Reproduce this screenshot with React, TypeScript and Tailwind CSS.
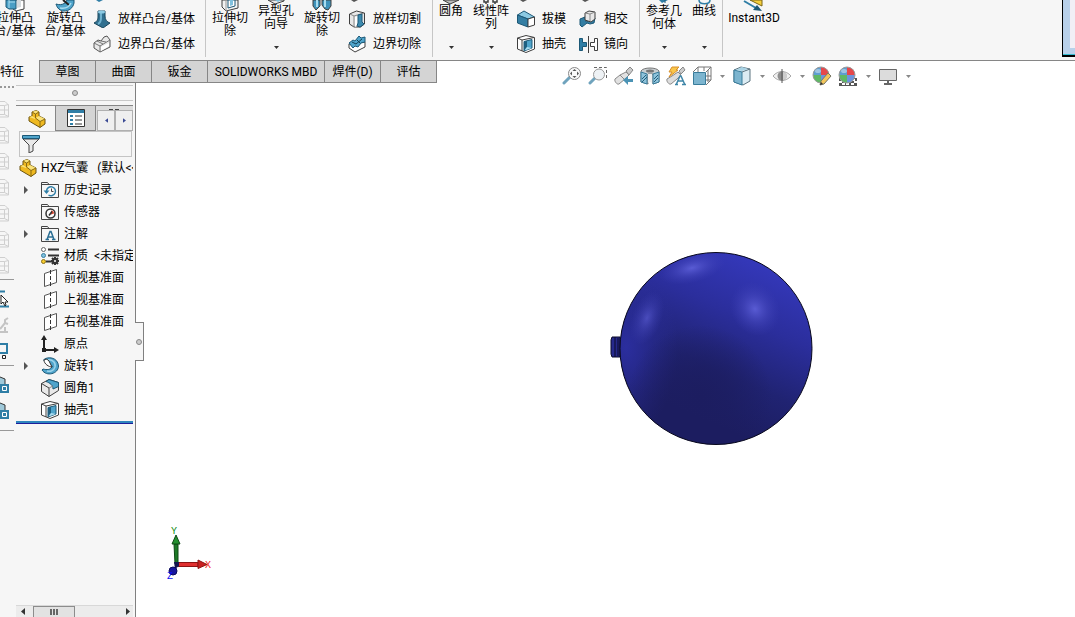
import type { ReactNode } from 'react';

type IconProps = { className?: string };

const OUTLINE = '#3f3f3f';
const BLUE = '#2f7ea6';
const SKY = '#7fc0de';

function Caret({ className = 'text-[#333]' }: IconProps) {
  return (
    <svg width="5" height="3" viewBox="0 0 5 3" className={className} aria-hidden="true">
      <path d="M0 0h5L2.5 3z" fill="currentColor" />
    </svg>
  );
}

/* ---------- large ribbon icons, only the lower part shows ---------- */

function ExtrudeTip() {
  return (
    <svg width="22" height="12" viewBox="0 0 22 12">
      <path d="M9 0v9l3 2 8-2V0z" fill="#fff" stroke={OUTLINE} />
      <path d="M13 0v8l4-1V0z" fill="#d5dadd" />
      <path d="M2 0v7l3 2h7V0z" fill="#4a9fc6" stroke="#1c5876" />
      <path d="M5 2h6M5 0v8" stroke="#a9dcef" />
    </svg>
  );
}

function RevolveTip() {
  return (
    <svg width="22" height="12" viewBox="0 0 22 12">
      <path d="M2 4c3 1 6 1 9-1l2-3h7v3c-1 5-5 8-10 8-4 0-7-3-8-7z" fill="#4fa4cb" stroke="#1c5876" />
      <path d="M9 0l6 5" stroke="#222" strokeWidth="2" />
      <path d="M6 8c5 1 9-1 11-5" stroke="#a9dcef" fill="none" strokeWidth="1.5" />
    </svg>
  );
}

function CutTip() {
  return (
    <svg width="18" height="12" viewBox="0 0 18 12">
      <path d="M1 0v7l4 4 12-3V0z" fill="#f2f2f2" stroke={OUTLINE} />
      <path d="M5 0v11" stroke="#999" />
      <path d="M7 0v8l7-2V0z" fill="#fff" stroke="#1c5876" />
      <path d="M9 0v6l3-1V0z" fill={SKY} />
    </svg>
  );
}

function HoleTip() {
  return (
    <svg width="18" height="5" viewBox="0 0 18 5">
      <path d="M1 0l7 4 9-3V0z" fill="#e8e8e8" stroke={OUTLINE} />
      <path d="M8 0l3 2 3-2z" fill={SKY} />
    </svg>
  );
}

function RevolveCutTip() {
  return (
    <svg width="20" height="12" viewBox="0 0 20 12">
      <path d="M1 0v6l3 4 4-4V0z" fill="#3f93bb" stroke={OUTLINE} />
      <path d="M10 0v5l3 4 3 1 3-4V0z" fill="#3f93bb" stroke={OUTLINE} />
      <path d="M5 0v7M13 0v7" stroke="#a9dcef" strokeWidth="2" />
    </svg>
  );
}

function FilletTip() {
  return (
    <svg width="18" height="5" viewBox="0 0 18 5">
      <path d="M1 0l7 4 9-4z" fill="#b8b8b8" stroke={OUTLINE} />
    </svg>
  );
}

function PatternTip() {
  return (
    <svg width="18" height="5" viewBox="0 0 18 5">
      <path d="M2 0v2h4V0M11 0v2h4V0M4 2v2M13 2v2" fill="none" stroke={OUTLINE} strokeWidth="1.5" />
    </svg>
  );
}

function ReferenceTip() {
  return (
    <svg width="18" height="5" viewBox="0 0 18 5">
      <path d="M4 0h9L7 3z" fill={BLUE} />
      <path d="M10 0v3" stroke="#1c5876" />
    </svg>
  );
}

function CurveTip() {
  return (
    <svg width="18" height="5" viewBox="0 0 18 5">
      <path d="M4 0c0 5 11 5 11 0" fill="none" stroke={BLUE} strokeWidth="1.5" />
    </svg>
  );
}

function Instant3DTip() {
  return (
    <svg width="22" height="12" viewBox="0 0 22 12">
      <path d="M7 0h12v6z" fill="#f6cf3c" stroke="#7a6414" />
      <path d="M1 1l12 7" stroke={BLUE} strokeWidth="2" />
      <path d="M19 11l-9-1 4-5z" fill="#1c5876" />
    </svg>
  );
}

/* ---------- small ribbon icons ---------- */

function Small({ children }: { children: ReactNode }) {
  return (
    <svg width="18" height="18" viewBox="0 0 18 18" className="shrink-0" aria-hidden="true">
      {children}
    </svg>
  );
}

function LoftIcon() {
  return (
    <Small>
      <path d="M5 1h7v5c0 4 2 6 5 7l-7 5-9-5c4-2 4-4 4-7z" fill="#31708f" stroke="#1b475c" />
      <path d="M8 2v6c0 3-1 5-3 6" stroke="#6fb2cf" strokeWidth="2" fill="none" />
      <ellipse cx="8.500" cy="2" rx="3.500" ry="1.500" fill="#8ccae3" />
    </Small>
  );
}

function BoundaryIcon() {
  return (
    <Small>
      <path d="M1 8l4-3 3 1 3-4 3-1 3 4v7l-10 5-6-4z" fill="#e9e9e9" stroke="#555" />
      <path d="M1 8l6 3 10-6M7 11v6M4 6l6 3M8 6l5 1" stroke="#777" fill="none" />
      <path d="M8 12l8-4v3l-8 5z" fill="#fff" />
    </Small>
  );
}

function LoftCutIcon() {
  return (
    <Small>
      <path d="M1.500 4l7-3 8 2v11l-4 3H6l-4.500-3z" fill="#e8e8e8" stroke={OUTLINE} />
      <path d="M2 4l4 2v11M6 6l10-3" stroke="#888" fill="none" />
      <path d="M7 7l3-1v9l-3 2z" fill="#fff" />
      <path d="M10 5l4-1v8l2 2-4 3-3-1 1-3z" fill="#3d8bb0" stroke="#1c5876" />
    </Small>
  );
}

function BoundaryCutIcon() {
  return (
    <Small>
      <path d="M1 9v4l6 4 10-5V7z" fill="#fff" stroke={OUTLINE} />
      <path d="M1 8l4-3 2 1 4-5 2 2 4-1v5l-4 1-3 4-3-1-2 2z" fill="#4fa4cb" stroke="#1c5876" />
      <path d="M4 7l4 2 6-5M9 5l3 3" stroke="#123f55" fill="none" />
    </Small>
  );
}

function DraftIcon() {
  return (
    <Small>
      <path d="M.5 5L7 1l10.500 6-6.500 2z" fill="#8ccae3" stroke="#1c5876" />
      <path d="M.5 5L11 9v8L.5 13z" fill="#347ea3" stroke="#1c5876" />
      <path d="M11 9l6.500-2v8L11 17z" fill="#fff" stroke={OUTLINE} />
    </Small>
  );
}

function ShellIcon() {
  return (
    <Small>
      <path d="M.5 3L9 .5l8.500 2V14L9 17.500.5 14z" fill="#fff" stroke={OUTLINE} />
      <path d="M.5 3L5 5v11M5 5l12-2.500" fill="none" stroke={OUTLINE} />
      <path d="M7 6.500l8-2v8.500l-8 3z" fill="#4fa4cb" stroke="#1c5876" />
      <path d="M7 6.500L10 6v6l-3 3.500z" fill="#1f5f80" />
      <path d="M7.500 15.500L10 12l5 1z" fill="#a9dcef" />
    </Small>
  );
}

function IntersectIcon() {
  return (
    <Small>
      <path d="M1 9l5-2 1 5 9-4-1 5-4 1-3-1-5 4-2-2z" fill="#347ea3" stroke="#1c5876" />
      <path d="M6 3l4-2 6 1v7l-4 3-6-2z" fill="#e8e8e8" stroke={OUTLINE} />
      <path d="M6 3l5 1 5-2M11 4v7" stroke="#888" fill="none" />
    </Small>
  );
}

function MirrorIcon() {
  return (
    <svg width="18" height="18" viewBox="0 0 18 18" className="shrink-0 overflow-visible" aria-hidden="true">
      <path d="M9.500 1v17" stroke={OUTLINE} />
      <path d="M.5 3.500h3v4h4v4h-4v4h-3z" fill={BLUE} stroke="#1c5876" />
      <path d="M18.500 3.500h-3v4h-4v4h4v4h3z" fill="#fff" stroke={OUTLINE} />
    </svg>
  );
}

/* ---------- heads-up view icons ---------- */

function ViewIcon({ children }: { children: ReactNode }) {
  return (
    <svg width="20" height="20" viewBox="0 0 20 20" aria-hidden="true">
      {children}
    </svg>
  );
}

function ZoomFitIcon() {
  return (
    <ViewIcon>
      <path d="M2 17l6-6" stroke="#6fa3bd" strokeWidth="3" strokeLinecap="round" />
      <circle cx="12.500" cy="7.500" r="6" fill="#fafafa" stroke="#888" />
      <path d="M12.500 3l2 2h-4zM12.500 12l2-2h-4zM8 7.500l2-2v4zM17 7.500l-2-2v4z" fill="#555" />
    </ViewIcon>
  );
}

function ZoomAreaIcon() {
  return (
    <ViewIcon>
      <path d="M6 1.500h12.500v11" stroke="#666" strokeDasharray="3 2" fill="none" />
      <path d="M2 17l5-5" stroke="#6fa3bd" strokeWidth="3" strokeLinecap="round" />
      <circle cx="11" cy="8.500" r="5.500" fill="#eef2f5" stroke="#999" />
    </ViewIcon>
  );
}

function PreviousViewIcon() {
  return (
    <ViewIcon>
      <path d="M1 13l5-4 6-3 3 3-4 4-6 5c-2 1-5-3-4-5z" fill="#e1e1e1" stroke="#888" />
      <path d="M12 5l4-4 3 3-4 5zM6 9l4 4" fill="#ccc" stroke="#888" />
      <path d="M9 14l5-4v3h5v3h-5v3z" fill="#4b93b5" />
    </ViewIcon>
  );
}

function SectionIcon() {
  return (
    <ViewIcon>
      <path d="M1 5c2-4 16-4 18 0v11l-6 2V8H8v10l-7-2z" fill="#c8ced1" stroke="#777" />
      <path d="M1 6l6 2v10l-6-2zM13 8l6-2v10l-6 2z" fill="#8fc3db" stroke="#397c9b" />
      <path d="M2 13l4-4M2 16l5-5M14 13l4-4M14 16l4-4" stroke="#245f7b" />
      <path d="M8 8h4v9l-2-1-2 1z" fill="#eee" />
      <ellipse cx="10" cy="5" rx="4" ry="1.500" fill="#777" />
    </ViewIcon>
  );
}

function AnnotationViewIcon() {
  return (
    <ViewIcon>
      <path d="M1 13l5-3 6-4 3 3-4 4-6 5c-2 1-5-3-4-5z" fill="#ddd" stroke="#888" />
      <path d="M13 5l4-4 2 3-4 4z" fill="#ccc" stroke="#888" />
      <path d="M6 1h7l-3 3h2L3 11l3-5H3z" fill="#f9c64a" stroke="#d8902c" />
      <path d="M10 19l4-9h1l4 9M12 15h5M9 18.500h3M16 18.500h4" fill="none" stroke="#3f86a8" strokeWidth="1.500" />
    </ViewIcon>
  );
}

function OrientationIcon() {
  return (
    <ViewIcon>
      <path d="M1 6l5-5h13v13l-5 5M6 1v5M14 6l5-5M12 1v4M14 10h5M14 14h5M16 4v12" fill="none" stroke="#777" />
      <path d="M1.500 6.500h12v12h-12z" fill="#7db5cf" stroke="#397c9b" />
    </ViewIcon>
  );
}

function DisplayStyleIcon() {
  return (
    <ViewIcon>
      <path d="M2 4l7-3 9 2v12l-7 4-9-3z" fill="#dcecf3" stroke="#5c7480" />
      <path d="M2 4l8 2v13l-8-3z" fill="#7db5cf" stroke="#397c9b" />
      <path d="M10 6l8-3" stroke="#5c7480" />
      <path d="M10 1L4 4l6 1 6-2z" fill="#a9d3e5" />
    </ViewIcon>
  );
}

function EyeIcon() {
  return (
    <ViewIcon>
      <path d="M1 10c5-6 13-6 18 0-5 6-13 6-18 0z" fill="#f1f1f1" stroke="#aaa" />
      <circle cx="10" cy="10" r="4.500" fill="#8e8e8e" />
      <path d="M10 3v14" stroke="#555" />
      <path d="M11 6a4 4 0 010 8z" fill="#ccc" />
    </ViewIcon>
  );
}

function Ball() {
  return (
    <g>
      <path d="M9 9V1a8 8 0 00-8 8z" fill="#5f9ed0" />
      <path d="M9 9V1a8 8 0 018 8z" fill="#e5484b" />
      <path d="M9 9H1a8 8 0 008 8z" fill="#5fb865" />
      <path d="M9 9h8a8 8 0 01-8 8z" fill="#6c94dc" />
      <ellipse cx="6" cy="5" rx="3" ry="2" fill="#fff" opacity="0.400" />
      <circle cx="9" cy="9" r="8" fill="none" stroke="#9a9a9a" />
    </g>
  );
}

function AppearanceIcon() {
  return (
    <ViewIcon>
      <Ball />
      <path d="M8 19l1-4 7-8 3 3-7 8z" fill="#f3c65c" stroke="#776" />
      <path d="M8 19l1-3 2 2z" fill="#333" />
    </ViewIcon>
  );
}

function SceneIcon() {
  return (
    <ViewIcon>
      <path d="M1 12h18v8H1z" fill="#555" />
      <path d="M3 13h3v2H3zM1 15h3v2H1zM4 17h3v2H4zM14 13h3v2h-3zM16 15h3v2h-3zM13 17h3v2h-3zM8 17h3v2H8z" fill="#fff" />
      <Ball />
    </ViewIcon>
  );
}

function MonitorIcon() {
  return (
    <ViewIcon>
      <path d="M1.500 3.500h17v11h-17z" fill="#dcdcdc" stroke="#666" />
      <path d="M9 15h2v2h3v2H6v-2h3z" fill="#666" />
    </ViewIcon>
  );
}

/* ---------- feature tree icons ---------- */

function TreeIcon({ children }: { children: ReactNode }) {
  return (
    <svg width="18" height="18" viewBox="0 0 18 18" className="shrink-0" aria-hidden="true">
      {children}
    </svg>
  );
}

function PartIcon() {
  return (
    <TreeIcon>
      <path d="M1 7l3-1V2l4-1.500L11 2v4l6 3v5l-5 3.500L1 11z" fill="#efb920" stroke="#6d5510" />
      <path d="M4 2l4-1.500L11 2 7.500 4zM7.500 8L11 6l6 3-5 2.500zM1 7l3-1 3 2v1z" fill="#fbe37a" />
      <path d="M4 2l3.500 2v4l4.500 3.500v6M12 11.500L17 9M7.500 4L11 2" fill="none" stroke="#8a6b12" />
    </TreeIcon>
  );
}

function Folder({ children }: { children: ReactNode }) {
  return (
    <TreeIcon>
      <path d="M.5 16.500v-15h6l1.500 2h9.500v13z" fill="#f7f7f7" stroke="#444" />
      <path d="M1 3.500h7" stroke="#444" />
      {children}
    </TreeIcon>
  );
}

function HistoryIcon() {
  return (
    <Folder>
      <path d="M5.500 10a4.500 4.500 0 112 4" fill="none" stroke={BLUE} strokeWidth="1.500" />
      <path d="M2.500 9.500h6l-3 3.500z" fill={BLUE} />
      <path d="M10.500 7.500v3h2" fill="none" stroke="#444" />
    </Folder>
  );
}

function SensorIcon() {
  return (
    <Folder>
      <circle cx="9.500" cy="10.500" r="4.500" fill="#fff" stroke="#333" strokeWidth="1.500" />
      <path d="M10 7.500c2 0 3 1 3 3l-3 1z" fill="#e04a34" />
      <path d="M8 12.500l3-4" stroke="#333" strokeWidth="1.500" />
    </Folder>
  );
}

function NoteIcon() {
  return (
    <Folder>
      <path d="M6 14.500l3-8h1l3 8M7 12h5M4.500 14.500H8M11 14.500h3.500" fill="none" stroke="#2b6f94" strokeWidth="1.500" />
    </Folder>
  );
}

function MaterialIcon() {
  return (
    <svg width="20" height="18" viewBox="0 0 20 18" className="shrink-0" aria-hidden="true">
      <circle cx="2.500" cy="2.500" r="2" fill="#fff" stroke="#666" />
      <circle cx="2.500" cy="8.500" r="2" fill={SKY} stroke="#3a7fa0" />
      <circle cx="2.500" cy="14.500" r="2" fill="#f6cc2c" stroke="#8c7015" />
      <path d="M7 2.500h11M7 8.500h11M5 14.500h6" stroke="#333" strokeWidth="2" />
      <path d="M14 10v8M10 14h8M11 11l6 6M17 11l-6 6" stroke="#333" strokeWidth="2" />
      <circle cx="14" cy="14" r="2" fill="#fff" stroke="#333" strokeWidth="2" />
    </svg>
  );
}

function PlaneIcon() {
  return (
    <TreeIcon>
      <path d="M3.500 4.500l12-4v13l-12 4z" fill="#fff" stroke="#555" />
      <path d="M9.500 1v16" stroke="#333" strokeDasharray="4 2" />
    </TreeIcon>
  );
}

function OriginIcon() {
  return (
    <TreeIcon>
      <path d="M3 3v12h12" fill="none" stroke="#222" strokeWidth="2" />
      <path d="M3 0l3 5H0zM18 15l-5-3v6z" fill="#222" />
      <path d="M1 13h4v4H1z" fill="#222" />
    </TreeIcon>
  );
}

function RevolveIcon() {
  return (
    <TreeIcon>
      <path d="M2.500 3C6-1 17 0 17.500 9c0 8-12 11-16.500 4l1-1c4 1 7 1 9-2 1-2-3-2-8.500-7z" fill="#4fa4cb" stroke="#1c5876" />
      <path d="M6 3c6-1 9 3 8 7-1 3-4 5-8 4" stroke="#9bd3ea" fill="none" strokeWidth="1.500" />
      <path d="M3 3c1-1 4-1 5 1l3 6C8 10 3 7 3 3z" fill="#fff" stroke="#333" />
    </TreeIcon>
  );
}

function FilletIcon() {
  return (
    <TreeIcon>
      <path d="M.5 4.500L8 .5l9.500 3v8l-9.500 6-7.500-5z" fill="#e9e9e9" stroke={OUTLINE} />
      <path d="M.5 4.500L8 9v8.500" fill="none" stroke={OUTLINE} />
      <path d="M5 2.500L8 .5l9.500 3v4L12 10c0-4-3-6-7-7.500z" fill="#4fa4cb" stroke="#1c5876" />
      <path d="M8 9l4-2" stroke="#888" />
    </TreeIcon>
  );
}

/* ---------- ribbon ---------- */

const TALL = 'flex h-[57px] shrink-0 flex-col items-center text-center leading-[13px]';

type BigButtonProps = {
  icon: ReactNode;
  lines: string[];
  width: string;
  menu?: boolean;
};

function BigButton({ icon, lines, width, menu }: BigButtonProps) {
  return (
    <button type="button" className={`${TALL} ${width}`}>
      {icon}
      {lines.map((line) => (
        <span key={line} className="block whitespace-nowrap">
          {line}
        </span>
      ))}
      {menu && <Caret className="mt-auto mb-2 text-[#333]" />}
    </button>
  );
}

function SmallButton({ icon, label }: { icon: ReactNode; label: string }) {
  return (
    <button type="button" className="flex h-[26px] items-center gap-[7px] whitespace-nowrap">
      {icon}
      {label}
    </button>
  );
}

function SmallColumn({ tip, width, children }: { tip: ReactNode; width: string; children: ReactNode }) {
  return (
    <div className={`flex shrink-0 flex-col ${width}`}>
      <div className="h-1.5">{tip}</div>
      {children}
    </div>
  );
}

function Sliver({ color }: { color: string }) {
  return (
    <svg width="18" height="3" viewBox="0 0 18 3" className="block">
      <path d="M3 0l3 2 4-2z" fill={color} />
    </svg>
  );
}

const GROUP = 'flex h-[57px] shrink-0 border-r border-[#c6c6c6]';

function Ribbon() {
  return (
    <header className="flex h-[60px] overflow-hidden bg-[#f6f6f6]">
      <div className={`${GROUP} -ml-2.5`}>
        <BigButton icon={<ExtrudeTip />} lines={['拉伸凸', '台/基体']} width="w-[50px]" />
        <BigButton icon={<RevolveTip />} lines={['旋转凸', '台/基体']} width="w-[50px]" />
        <SmallColumn tip={<Sliver color={BLUE} />} width="w-[115px] pl-[3px]">
          <SmallButton icon={<LoftIcon />} label="放样凸台/基体" />
          <SmallButton icon={<BoundaryIcon />} label="边界凸台/基体" />
        </SmallColumn>
      </div>
      <div className={`${GROUP} pl-px`}>
        <BigButton icon={<CutTip />} lines={['拉伸切', '除']} width="w-[46px]" />
        <BigButton icon={<HoleTip />} lines={['异型孔', '向导']} width="w-[46px]" menu />
        <BigButton icon={<RevolveCutTip />} lines={['旋转切', '除']} width="w-[46px]" />
        <SmallColumn tip={<Sliver color="#555" />} width="w-[87px] pl-[3px]">
          <SmallButton icon={<LoftCutIcon />} label="放样切割" />
          <SmallButton icon={<BoundaryCutIcon />} label="边界切除" />
        </SmallColumn>
      </div>
      <div className={GROUP}>
        <BigButton icon={<FilletTip />} lines={['圆角']} width="w-9" menu />
        <BigButton icon={<PatternTip />} lines={['线性阵', '列']} width="w-11" menu />
        <SmallColumn tip={<Sliver color="#555" />} width="w-[63px] pl-1">
          <SmallButton icon={<DraftIcon />} label="拔模" />
          <SmallButton icon={<ShellIcon />} label="抽壳" />
        </SmallColumn>
        <SmallColumn tip={<Sliver color="#555" />} width="w-[63px] pl-[3px]">
          <SmallButton icon={<IntersectIcon />} label="相交" />
          <SmallButton icon={<MirrorIcon />} label="镜向" />
        </SmallColumn>
      </div>
      <div className={`${GROUP} pr-0.5`}>
        <BigButton icon={<ReferenceTip />} lines={['参考几', '何体']} width="w-12" menu />
        <BigButton icon={<CurveTip />} lines={['曲线']} width="w-8" menu />
      </div>
      <BigButton icon={<Instant3DTip />} lines={['Instant3D']} width="w-[62px]" />
      <div className="ml-auto h-[57px] w-[13px] border-b-2 border-l border-black">
        <div className="flex h-full border-b border-[#35bcd0] bg-[#b9d1ea] pb-1.5 pl-[7px]">
          <div className="flex-1 bg-[#f1eff6]" />
        </div>
      </div>
    </header>
  );
}

/* ---------- command tabs and view toolbar ---------- */

const COMMAND_TABS = [
  { label: '草图', width: 'w-14' },
  { label: '曲面', width: 'w-14' },
  { label: '钣金', width: 'w-14' },
  { label: 'SOLIDWORKS MBD', width: 'w-[117px]' },
  { label: '焊件(D)', width: 'w-14' },
  { label: '评估', width: 'w-14' },
];

const VIEW_TOOLS = [
  { name: 'Zoom to fit', icon: <ZoomFitIcon /> },
  { name: 'Zoom to area', icon: <ZoomAreaIcon /> },
  { name: 'Previous view', icon: <PreviousViewIcon /> },
  { name: 'Section view', icon: <SectionIcon /> },
  { name: 'Annotation views', icon: <AnnotationViewIcon /> },
  { name: 'View orientation', icon: <OrientationIcon />, menu: true },
  { name: 'Display style', icon: <DisplayStyleIcon />, menu: true },
  { name: 'Hide or show items', icon: <EyeIcon />, menu: true },
  { name: 'Edit appearance', icon: <AppearanceIcon /> },
  { name: 'Apply scene', icon: <SceneIcon />, menu: true },
  { name: 'View settings', icon: <MonitorIcon />, menu: true },
];

function TabBar() {
  return (
    <div className="flex h-[23px]">
      <nav className="flex shrink-0">
        <button type="button" className="w-[39px] bg-[#f6f6f6] pr-[15px] whitespace-nowrap">
          特征
        </button>
        {COMMAND_TABS.map((tab) => (
          <button
            key={tab.label}
            type="button"
            className={`${tab.width} border-y border-l border-[#868686] bg-[#d4d4d4] whitespace-nowrap last:w-[57px] last:border-r`}
          >
            {tab.label}
          </button>
        ))}
      </nav>
      <div className="flex flex-1 items-start border-t border-[#868686] pl-[122px]">
        {VIEW_TOOLS.map((tool) => (
          <div key={tool.name} className="flex h-[30px] shrink-0 items-center">
            <button type="button" aria-label={tool.name} className="flex w-[26px] justify-center">
              {tool.icon}
            </button>
            {tool.menu && (
              <button type="button" aria-label={`${tool.name} menu`} className="flex w-3.5 justify-center">
                <Caret className="text-[#888]" />
              </button>
            )}
          </div>
        ))}
      </div>
    </div>
  );
}

/* ---------- left tool strip ---------- */

function CubeOutline() {
  return (
    <svg width="10" height="18" viewBox="0 0 10 18">
      <path d="M0 1.500h5l3.500 3.500v12H0M0 5.500h4.500v9H0M4.500 5.500l4-1M4.500 14.500l4 2M0 10h8" fill="none" stroke="#cfcfcf" />
    </svg>
  );
}

function SketchCursor() {
  return (
    <svg width="10" height="18" viewBox="0 0 10 18">
      <path d="M0 1.500h5M0 16.500h9" stroke={BLUE} strokeWidth="2" />
      <path d="M1 5v9l2-2 2 4 1-1-1-3h3z" fill="#fff" stroke="#222" />
    </svg>
  );
}

function WrenchShape() {
  return (
    <svg width="10" height="18" viewBox="0 0 10 18">
      <path d="M8 2L5 4v3l3 1M0 13l5-6M0 16h8M5 11v5" fill="none" stroke="#c4c4c4" strokeWidth="2" />
    </svg>
  );
}

function NodeShape() {
  return (
    <svg width="10" height="18" viewBox="0 0 10 18">
      <path d="M0 2h7v9H0" fill="none" stroke={BLUE} strokeWidth="2" />
      <path d="M2.500 13.500h3v3h-3z" fill="#fff" stroke="#222" />
    </svg>
  );
}

function LinkedShape() {
  return (
    <svg width="10" height="18" viewBox="0 0 10 18">
      <path d="M0 1l5 2v6H0" fill="#9fc9da" stroke="#333" />
      <path d="M0 8h9v9H0z" fill={BLUE} />
      <path d="M2.500 10.500h4v4h-4z" fill={BLUE} stroke="#fff" />
    </svg>
  );
}

const STRIP = [
  [1, 2, 3, 4, 5, 6, 7].map((n) => ({ name: `View ${n}`, icon: <CubeOutline /> })),
  [
    { name: 'Sketch', icon: <SketchCursor /> },
    { name: 'Repair', icon: <WrenchShape /> },
    { name: 'Nodes', icon: <NodeShape /> },
  ],
  [
    { name: 'Link body', icon: <LinkedShape /> },
    { name: 'Link face', icon: <LinkedShape /> },
  ],
];

function ToolStrip() {
  return (
    <div className="w-4 shrink-0 overflow-hidden">
      <div className="mt-[3px] mb-2 w-3.5 border-t-2 border-dotted border-[#999]" />
      {STRIP.map((section) => (
        <div key={section[0].name} className="mb-1.5 w-3.5 border-b border-[#999] pb-px last:pb-1.5">
          {section.map((tool) => (
            <button key={tool.name} type="button" aria-label={tool.name} className="flex h-[26px] items-center">
              {tool.icon}
            </button>
          ))}
        </div>
      ))}
    </div>
  );
}

/* ---------- feature manager ---------- */

const FEATURES = [
  { label: '历史记录', icon: <HistoryIcon />, open: true },
  { label: '传感器', icon: <SensorIcon /> },
  { label: '注解', icon: <NoteIcon />, open: true },
  { label: '材质  <未指定>', icon: <MaterialIcon /> },
  { label: '前视基准面', icon: <PlaneIcon /> },
  { label: '上视基准面', icon: <PlaneIcon /> },
  { label: '右视基准面', icon: <PlaneIcon /> },
  { label: '原点', icon: <OriginIcon /> },
  { label: '旋转1', icon: <RevolveIcon />, open: true },
  { label: '圆角1', icon: <FilletIcon /> },
  { label: '抽壳1', icon: <ShellIcon /> },
];

function ManagerTabs() {
  return (
    <div className="flex h-[26px] border-t border-[#868686]">
      <button type="button" aria-label="Feature tree" className="flex w-[39px] items-center justify-center pl-0.5">
        <PartIcon />
      </button>
      <button
        type="button"
        aria-label="Properties"
        className="flex w-[41px] items-center justify-center border-x border-b border-[#868686] bg-[#d4d4d4]"
      >
        <svg width="18" height="18" viewBox="0 0 18 18">
          <path d="M.5.500h17v17H.5z" fill="#fff" stroke="#333" />
          <path d="M1 1h16v3H1z" fill={BLUE} />
          <path d="M3 6h3v2H3zM3 10h3v2H3zM3 14h3v2H3z" fill={BLUE} />
          <path d="M8 7h7M8 11h7M8 15h7" stroke="#333" />
        </svg>
      </button>
      <div className="flex flex-1 flex-col bg-[#dcdcdc] pl-px">
        <svg width="24" height="4" viewBox="0 0 24 4" className="block shrink-0">
          <path d="M12 3.500h4M18 3.500h4" stroke="#444" />
        </svg>
        <div className="flex flex-1 text-[#3b4a94]">
          {['M4 0v6L0 3z', 'M0 0v6l4-3z'].map((d, i) => (
            <button
              key={d}
              type="button"
              aria-label={i === 0 ? 'Previous tabs' : 'Next tabs'}
              className="flex flex-1 items-center justify-center border border-[#b0b0b0] bg-[#efefef]"
            >
              <svg width="3" height="5" viewBox="0 0 4 6">
                <path d={d} fill="currentColor" />
              </svg>
            </button>
          ))}
        </div>
      </div>
    </div>
  );
}

function FeatureManager() {
  return (
    <div className="flex w-[117px] shrink-0 flex-col overflow-hidden">
      <div className="mt-0.5 mb-1 flex h-4 items-center justify-center border-y border-[#c8c8c8]">
        <span className="size-1.5 rounded-full border border-[#888] bg-[#ccc]" />
      </div>
      <ManagerTabs />
      <label className="mr-px ml-[3px] flex h-[26px] items-center border border-[#c4c4c4] pl-0.5">
        <svg width="18" height="18" viewBox="0 0 18 18" className="shrink-0">
          <path d="M1 4l6 6v8l4-2v-6l6-6z" fill="#e9e9e9" stroke="#444" />
          <path d="M.5.500h17v3H.5z" fill="#4fa4cb" stroke="#1c5876" />
        </svg>
        <input type="text" aria-label="Filter" className="min-w-0 flex-1 bg-transparent outline-none" />
      </label>
      <div className="flex h-[22px] items-center gap-1 pl-[3px] whitespace-pre">
        <PartIcon />
        {'HXZ气囊   (默认<<默认>'}
      </div>
      <ul>
        {FEATURES.map((feature) => (
          <li key={feature.label} className="flex h-[22px] items-center whitespace-pre">
            <span className="w-[25px] shrink-0 pl-2">
              {feature.open && (
                <svg width="4" height="8" viewBox="0 0 4 8">
                  <path d="M0 0v8l4-4z" fill="#555" />
                </svg>
              )}
            </span>
            <span className="w-[23px] shrink-0">{feature.icon}</span>
            {feature.label}
          </li>
        ))}
      </ul>
      <div className="h-[3px] shrink-0 border-b border-[#1d1d9c] bg-[#2f86bd]" />
      <div className="mt-auto flex h-3 shrink-0 items-center border-t border-[#d8d8d8] bg-[#ececec] text-[#333]">
        <svg width="17" height="7" viewBox="0 0 17 7">
          <path d="M9 0v7L5 3.500z" fill="currentColor" />
        </svg>
        <div className="flex h-full w-[42px] items-center justify-center gap-px border border-b-0 border-[#8c8c8c] bg-[#e2e2e2]">
          <span className="h-1.5 w-0.5 bg-[#666]" />
          <span className="h-1.5 w-0.5 bg-[#666]" />
          <span className="h-1.5 w-0.5 bg-[#666]" />
        </div>
        <svg width="9" height="7" viewBox="0 0 9 7" className="ml-auto">
          <path d="M2 0v7l4-3.500z" fill="currentColor" />
        </svg>
      </div>
    </div>
  );
}

/* ---------- graphics area ---------- */

function Balloon() {
  return (
    <svg width="204" height="196" viewBox="0 0 204 196" className="absolute top-[168px] left-[474px]">
      <defs>
        <linearGradient id="body" x1="0.750" y1="0.060" x2="0.400" y2="0.850">
          <stop offset="0" stopColor="#3438ba" />
          <stop offset="0.350" stopColor="#2b2e9c" />
          <stop offset="0.700" stopColor="#202372" />
          <stop offset="1" stopColor="#1c1d60" />
        </linearGradient>
        <radialGradient id="shade">
          <stop offset="0" stopColor="#1c1d60" />
          <stop offset="0.400" stopColor="#1c1d60" stopOpacity="0.700" />
          <stop offset="1" stopColor="#1c1d60" stopOpacity="0" />
        </radialGradient>
        <radialGradient id="edge">
          <stop offset="0" stopColor="#2b2e9e" />
          <stop offset="1" stopColor="#2b2e9e" stopOpacity="0" />
        </radialGradient>
        <radialGradient id="glow">
          <stop offset="0" stopColor="#6163dc" stopOpacity="0.850" />
          <stop offset="0.500" stopColor="#5052c8" stopOpacity="0.400" />
          <stop offset="1" stopColor="#4042b8" stopOpacity="0" />
        </radialGradient>
        <clipPath id="ball">
          <circle cx="106" cy="97.500" r="96" />
        </clipPath>
      </defs>
      <path d="M2 86h8v20H2l-1-3V89z" fill="#26298c" stroke="#0b0b2a" />
      <path d="M5 86v20M8 87v18" stroke="#0b0b2a" />
      <g clipPath="url(#ball)">
        <rect x="10" y="1" width="192" height="193" fill="url(#body)" />
        <ellipse cx="16" cy="96" rx="52" ry="90" fill="url(#edge)" />
        <ellipse cx="90" cy="146" rx="72" ry="72" fill="url(#shade)" />
        <ellipse cx="82" cy="17" rx="34" ry="15" fill="url(#glow)" transform="rotate(-14 82 17)" />
        <ellipse cx="37" cy="67" rx="15" ry="28" fill="url(#glow)" transform="rotate(20 37 67)" opacity="0.700" />
        <ellipse cx="145" cy="58" rx="24" ry="28" fill="url(#glow)" transform="rotate(-30 145 58)" />
      </g>
      <circle cx="106" cy="97.500" r="96" fill="none" stroke="#08081c" />
    </svg>
  );
}

function Triad() {
  return (
    <svg width="48" height="56" viewBox="0 0 48 56" className="absolute bottom-9 left-7">
      <path d="M11 39l-1-20h4v20z" fill="#1d7a26" stroke="#0e4a15" />
      <path d="M12 10l4 9H8z" fill="#249030" stroke="#0e4a15" />
      <path d="M14 37.500h20v4H14z" fill="#e03030" stroke="#8d1414" />
      <path d="M34 35l9 4.500-9 4z" fill="#c92020" stroke="#8d1414" />
      <path d="M10 37h5v4l-4 3z" fill="#15154e" />
      <circle cx="9" cy="46" r="4" fill="#17179c" stroke="#0a0a5c" />
      <g fontFamily="Liberation Mono, monospace" fontSize="10">
        <text x="7" y="9" fill="#118a11">Y</text>
        <text x="41" y="43" fill="#f01818">X</text>
        <text x="3" y="54" fill="#1010f0">Z</text>
      </g>
    </svg>
  );
}

export default function App() {
  return (
    <div className="flex h-screen flex-col overflow-hidden bg-white font-['Roboto','Noto_Sans_CJK_SC',sans-serif] text-xs text-black">
      <Ribbon />
      <TabBar />
      <div className="flex min-h-0 flex-1">
        <aside className="flex w-[136px] shrink-0 border-r border-[#808080] bg-[#f6f6f6]">
          <ToolStrip />
          <FeatureManager />
        </aside>
        <main className="relative flex-1">
          <button
            type="button"
            aria-label="Collapse panel"
            className="absolute top-[239px] -left-px flex h-[39px] w-[9px] items-center justify-center border border-l-0 border-[#808080] bg-[#f6f6f6]"
          >
            <span className="size-1.5 rounded-full border border-[#888] bg-[#ccc]" />
          </button>
          <Balloon />
          <Triad />
        </main>
      </div>
    </div>
  );
}
